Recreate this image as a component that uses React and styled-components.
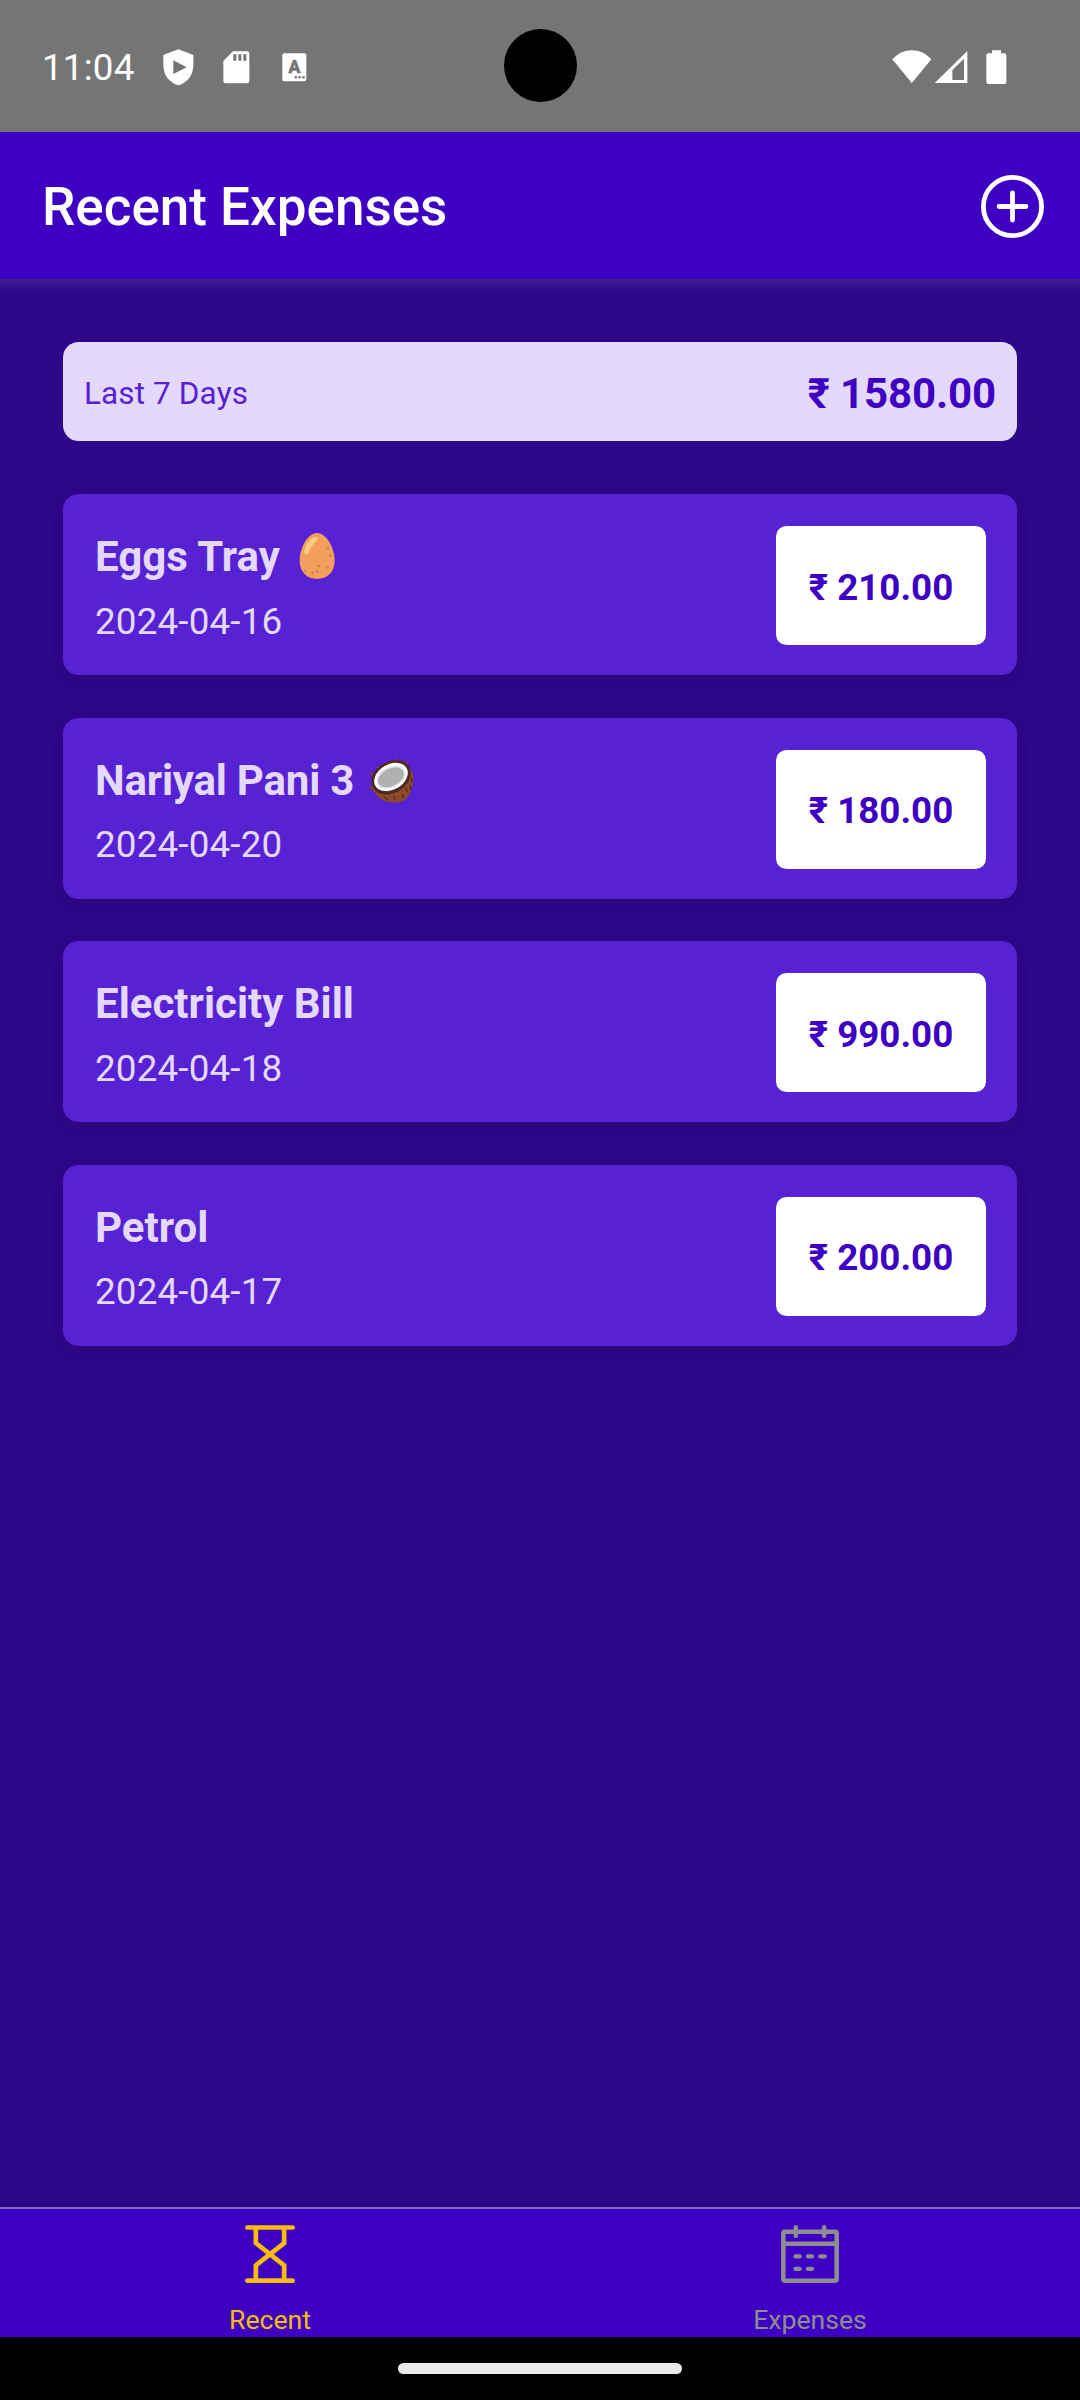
import React from "react";
import styled, { createGlobalStyle } from "styled-components";

const colors = {
  primary50: "#e4d9fd",
  primary400: "#5721d4",
  primary500: "#3e00c3",
  primary700: "#2d0689",
  accent500: "#f7bc0c",
  muted: "#8e8e8f",
  status: "#757575",
};

const GlobalStyle = createGlobalStyle`
  * { box-sizing: border-box; }
  body { margin: 0; background: #000; }
`;

const Screen = styled.div`
  width: 1080px;
  height: 2400px;
  display: flex;
  flex-direction: column;
  overflow: hidden;
  background: ${colors.primary700};
  font-family: Roboto, "Noto Sans", sans-serif;
`;

const StatusBar = styled.div`
  position: relative;
  flex: none;
  height: 132px;
  padding: 2px 73px 0 42px;
  display: flex;
  align-items: center;
  background: ${colors.status};
  color: #fff;
`;

const Clock = styled.span`
  width: 121px;
  padding-top: 2px;
  font-size: 36.75px;
  line-height: 44px;
  letter-spacing: 0.2px;
`;

const StatusIcons = styled.div`
  display: flex;
  align-items: center;
  margin-left: ${(p) => (p.$right ? "auto" : "0")};
  svg { display: block; }
`;

const Camera = styled.div`
  position: absolute;
  left: 503.5px;
  top: 29px;
  width: 73px;
  height: 73px;
  border-radius: 50%;
  background: #000;
`;

const Header = styled.header`
  flex: none;
  height: 147px;
  padding: 0 36px 0 42px;
  display: flex;
  align-items: center;
  justify-content: space-between;
  background: ${colors.primary500};
`;

const HeaderTitle = styled.h1`
  margin: 0;
  padding-top: 3px;
  font-size: 53px;
  font-weight: 500;
  line-height: 62px;
  color: #fff;
`;

const IconButton = styled.button`
  display: flex;
  margin: 2px 0 0;
  padding: 0;
  border: 0;
  background: none;
`;

const Content = styled.main`
  flex: 1;
  padding: 63px 63px 0;
  background: linear-gradient(#412090 0, #36148c 5px, #300b8a 12px, ${colors.primary700} 20px);
`;

const Summary = styled.section`
  height: 99px;
  padding: 4px 21px 0;
  display: flex;
  align-items: center;
  justify-content: space-between;
  border-radius: 15.75px;
  background: ${colors.primary50};
`;

const Period = styled.span`
  font-size: 31.5px;
  line-height: 38px;
  letter-spacing: 0.12px;
  color: ${colors.primary400};
`;

const Total = styled.span`
  font-size: 42px;
  font-weight: 700;
  line-height: 50px;
  letter-spacing: -0.12px;
  color: ${colors.primary500};
`;

const ExpenseList = styled.ul`
  margin: 53px 0 0;
  padding: 0;
  display: flex;
  flex-direction: column;
  gap: 42.6px;
  list-style: none;
`;

const ExpenseCard = styled.li`
  height: 181px;
  padding: 0 31px 0 32px;
  display: flex;
  align-items: center;
  justify-content: space-between;
  border-radius: 15.75px;
  background: ${colors.primary400};
  box-shadow: 0 5px 10px rgba(46, 12, 110, 0.5);
`;

const Details = styled.div`
  padding-top: 6.5px;
  display: flex;
  flex-direction: column;
  gap: 17.5px;
`;

const Name = styled.div`
  display: flex;
  align-items: center;
  font-size: 42px;
  font-weight: 700;
  line-height: 50px;
  letter-spacing: ${(p) => p.$tracking || 0}px;
  color: ${colors.primary50};
  svg { margin: 0 0 2px ${(p) => p.$gap || 14}px; }
`;

const DateText = styled.div`
  font-size: 36.75px;
  line-height: 44px;
  letter-spacing: 0.18px;
  color: ${colors.primary50};
`;

const Amount = styled.div`
  width: 210px;
  height: 119px;
  margin-top: 2px;
  padding-top: 4px;
  display: flex;
  align-items: center;
  justify-content: center;
  border-radius: 10.5px;
  background: #fff;
  color: ${colors.primary500};
  font-size: 36.75px;
  font-weight: 700;
  line-height: 44px;
`;

const TabBar = styled.nav`
  flex: none;
  height: 130px;
  display: flex;
  border-top: 2px solid #8866c4;
  background: ${colors.primary500};
`;

const Tab = styled.a`
  flex: 1;
  padding-top: 16px;
  display: flex;
  flex-direction: column;
  align-items: center;
  gap: 21px;
  color: ${(p) => (p.$active ? colors.accent500 : colors.muted)};
  svg { display: block; }
`;

const TabLabel = styled.span`
  font-size: 26.6px;
  line-height: 32px;
`;

const GestureBar = styled.div`
  flex: none;
  height: 63px;
  display: flex;
  align-items: center;
  justify-content: center;
  background: #000;
`;

const Handle = styled.div`
  width: 284px;
  height: 11px;
  border-radius: 5.5px;
  background: #ebebeb;
`;

const NotificationIcons = () => (
  <svg width="144" height="37" viewBox="488 146 432 111" fill="#fff">
    <path d="M534 147 L579 164 V194 C579 226 560 247 534 255 C508 247 489 226 489 194 V164Z" />
    <path d="M519 180V221L559 200.500Z" fill={colors.status} />
    <path d="M698 153H740Q747 153 747 160V242Q747 249 740 249H676Q669 249 669 242V182Z" />
    <path d="M699 162h9v19h-9zM714 162h9v19h-9zM729 162h9v19h-9z" fill={colors.status} />
    <rect x="846" y="159" width="72" height="84" rx="6" />
    <text x="882" y="219" textAnchor="middle" fontFamily="Roboto, sans-serif" fontWeight="700" fontSize="53" fill={colors.status} stroke={colors.status} strokeWidth="2">A</text>
    <g fill={colors.status}>
      <circle cx="886.500" cy="231" r="3.800" />
      <circle cx="898" cy="231" r="3.800" />
      <circle cx="909.500" cy="231" r="3.800" />
    </g>
  </svg>
);

const ConnectivityIcons = () => (
  <svg width="115" height="35" viewBox="515 146 345 105" fill="#fff">
    <path d="M516 174Q540 147 574.500 147Q609 147 633 174L574.500 245Z" />
    <path fillRule="evenodd" d="M643 245L741 149V245ZM696 206V236H731V172Z" />
    <path d="M815 147H842V156H852Q858 156 858 162V242Q858 248 852 248H804Q798 248 798 242V162Q798 156 804 156H815Z" />
  </svg>
);

const AddIcon = () => (
  <svg width="63" height="64" viewBox="0 0 63 64" fill="none" stroke="#fff" strokeWidth="4.800" strokeLinecap="round">
    <circle cx="31.500" cy="31.500" r="29.100" />
    <path d="M31.500 18V45M18 31.500H45" />
  </svg>
);

const HourglassIcon = () => (
  <svg width="50" height="58" viewBox="135 105 150 174" fill="none" stroke="currentColor" strokeWidth="14" strokeLinecap="round">
    <path d="M142 112.500H278M142 272H278" />
    <path strokeLinecap="butt" d="M167.500 113V159L252.500 226V272M252.500 113V159L167.500 226V272" />
  </svg>
);

const CalendarIcon = () => (
  <svg width="58" height="58" viewBox="243 105 174 174" fill="none" stroke="currentColor" strokeWidth="13.500" strokeLinecap="round">
    <rect x="250" y="125.500" width="160" height="146.500" rx="5" />
    <path d="M250 161H410M287.500 112V137M372.500 112V137" />
    <path strokeWidth="13" d="M286.500 199H299M324 199H336M361 199H374M286.500 236.500H299M324 236.500H336" />
  </svg>
);

const EggIcon = () => (
  <svg width="46" height="46" viewBox="760 640 138 138">
    <path d="M829 640C858 640 882 687 882 722C882 758 860 778 829 778C799 778 777 758 777 722C777 687 800 640 829 640Z" fill="#f29f5c" />
    <path d="M827 651C835 651 832 658 824 667C812 679 806 692 804 699C800 708 791 706 791 697C791 680 808 652 827 651Z" fill="#ffcc80" />
    <g fill="#d07a50">
      <circle cx="861" cy="687" r="3.500" />
      <circle cx="868" cy="708" r="4" />
      <circle cx="834" cy="739" r="4" />
      <circle cx="861" cy="744" r="3.500" />
      <circle cx="794" cy="754" r="3" />
      <circle cx="816" cy="760" r="4.500" />
      <circle cx="830" cy="756" r="4" />
    </g>
  </svg>
);

const CoconutIcon = () => (
  <svg width="46" height="46" viewBox="984 204 138 138">
    <path d="M1069 204L1072 218M1103 213L1100 230M1012 232L1018 242M987 250L1003 260M985 294L1000 297M993 300L1003 290" stroke="#8b4428" strokeWidth="3.500" fill="none" />
    <path d="M994 290C1000 308 1010 320 1026 332C1046 342 1078 345 1096 332C1110 318 1120 294 1121 264L1110 236Z" fill="#8d4a2c" />
    <ellipse cx="1053" cy="265" rx="63" ry="47" transform="rotate(-30 1053 265)" fill="#4e2a1e" />
    <ellipse cx="1053" cy="264" rx="54" ry="38" transform="rotate(-30 1053 264)" fill="#fff" />
    <ellipse cx="1053" cy="265" rx="43" ry="28" transform="rotate(-27 1053 265)" fill="#b0b0b0" stroke="#dedede" strokeWidth="4" />
    <path d="M1033 325L1044 333M1060 321L1066 334M1087 315L1092 328M1097 296L1103 310M1111 288L1113 303M1114 266L1116 280" stroke="#4e2a1e" strokeWidth="4" fill="none" />
  </svg>
);

const expenses = [
  { name: "Eggs Tray", icon: <EggIcon />, gap: 14, date: "2024-04-16", amount: "210.00" },
  { name: "Nariyal Pani 3", icon: <CoconutIcon />, gap: 14, tracking: -0.2, date: "2024-04-20", amount: "180.00" },
  { name: "Electricity Bill", date: "2024-04-18", amount: "990.00" },
  { name: "Petrol", date: "2024-04-17", amount: "200.00" },
];

export default function App() {
  return (
    <Screen>
      <GlobalStyle />
      <StatusBar>
        <Clock>11:04</Clock>
        <StatusIcons><NotificationIcons /></StatusIcons>
        <Camera />
        <StatusIcons $right><ConnectivityIcons /></StatusIcons>
      </StatusBar>
      <Header>
        <HeaderTitle>Recent Expenses</HeaderTitle>
        <IconButton aria-label="Add expense"><AddIcon /></IconButton>
      </Header>
      <Content>
        <Summary>
          <Period>Last 7 Days</Period>
          <Total>₹ 1580.00</Total>
        </Summary>
        <ExpenseList>
          {expenses.map((e) => (
            <ExpenseCard key={e.name}>
              <Details>
                <Name $gap={e.gap} $tracking={e.tracking}>{e.name}{e.icon}</Name>
                <DateText>{e.date}</DateText>
              </Details>
              <Amount>₹ {e.amount}</Amount>
            </ExpenseCard>
          ))}
        </ExpenseList>
      </Content>
      <TabBar>
        <Tab $active><HourglassIcon /><TabLabel>Recent</TabLabel></Tab>
        <Tab><CalendarIcon /><TabLabel>Expenses</TabLabel></Tab>
      </TabBar>
      <GestureBar><Handle /></GestureBar>
    </Screen>
  );
}
